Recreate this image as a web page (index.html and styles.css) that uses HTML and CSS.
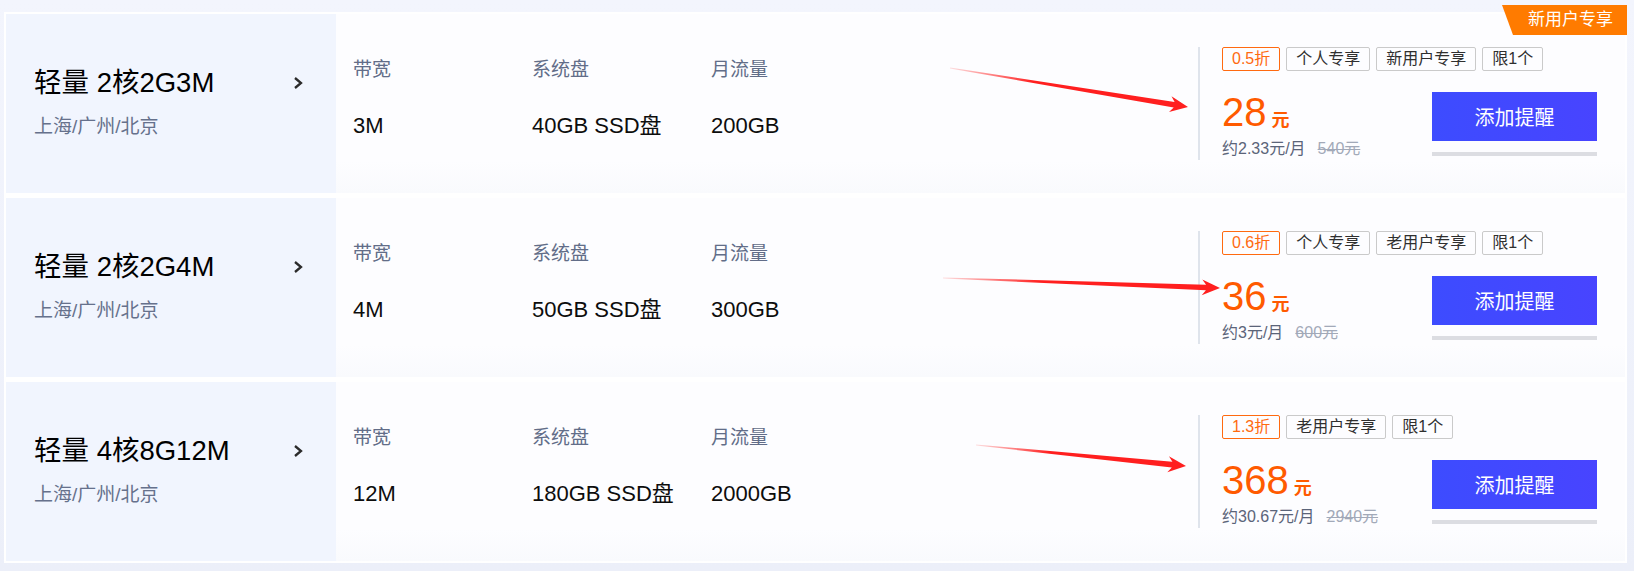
FILE: index.html
```html
<!DOCTYPE html>
<html lang="zh-CN">
<head>
  <meta charset="UTF-8" />
  <meta name="viewport" content="width=device-width, initial-scale=1" />
  <title>轻量应用服务器</title>
  <link rel="stylesheet" href="styles.css">
</head>
<body>
  <div class="list">

    <div class="plan">
      <div class="plan-name">
        <div class="plan-title">
          <span>轻量 2核2G3M</span>
          <svg class="chevron" width="10" height="14" viewBox="0 0 10 14"><polyline points="2,2 8,7 2,12" /></svg>
        </div>
        <div class="plan-region">上海/广州/北京</div>
      </div>
      <div class="specs">
        <div class="spec"><div class="spec-label">带宽</div><div class="spec-value">3M</div></div>
        <div class="spec"><div class="spec-label">系统盘</div><div class="spec-value">40GB SSD盘</div></div>
        <div class="spec"><div class="spec-label">月流量</div><div class="spec-value">200GB</div></div>
      </div>
      <div class="deal">
        <div class="deal-info">
          <div class="tags">
            <span class="tag tag-off">0.5折</span>
            <span class="tag">个人专享</span>
            <span class="tag">新用户专享</span>
            <span class="tag">限1个</span>
          </div>
          <div class="price"><span class="price-num">28</span><span class="price-unit">元</span></div>
          <div class="price-sub">约2.33元/月<s>540元</s></div>
        </div>
        <div class="deal-action">
          <button class="remind">添加提醒</button>
          <div class="remind-bar"></div>
        </div>
      </div>
      <svg class="arrow">
        <defs>
          <linearGradient id="fade1" x1="0" y1="0" x2="1" y2="0">
            <stop offset="0" stop-color="#ff3030" stop-opacity="0.15" />
            <stop offset="0.35" stop-color="#ff1f1f" stop-opacity="1" />
          </linearGradient>
        </defs>
        <polygon fill="url(#fade1)" points="943.9,54.4 1167.7,93.5 1163,98 1182,93 1165.5,82.2 1168.6,88 944.1,53.6" />
      </svg>
      <div class="ribbon">新用户专享</div>
    </div>

    <div class="plan">
      <div class="plan-name">
        <div class="plan-title">
          <span>轻量 2核2G4M</span>
          <svg class="chevron" width="10" height="14" viewBox="0 0 10 14"><polyline points="2,2 8,7 2,12" /></svg>
        </div>
        <div class="plan-region">上海/广州/北京</div>
      </div>
      <div class="specs">
        <div class="spec"><div class="spec-label">带宽</div><div class="spec-value">4M</div></div>
        <div class="spec"><div class="spec-label">系统盘</div><div class="spec-value">50GB SSD盘</div></div>
        <div class="spec"><div class="spec-label">月流量</div><div class="spec-value">300GB</div></div>
      </div>
      <div class="deal">
        <div class="deal-info">
          <div class="tags">
            <span class="tag tag-off">0.6折</span>
            <span class="tag">个人专享</span>
            <span class="tag">老用户专享</span>
            <span class="tag">限1个</span>
          </div>
          <div class="price"><span class="price-num">36</span><span class="price-unit">元</span></div>
          <div class="price-sub">约3元/月<s>600元</s></div>
        </div>
        <div class="deal-action">
          <button class="remind">添加提醒</button>
          <div class="remind-bar"></div>
        </div>
      </div>
      <svg class="arrow">
        <defs>
          <linearGradient id="fade2" x1="0" y1="0" x2="1" y2="0">
            <stop offset="0" stop-color="#ff3030" stop-opacity="0.15" />
            <stop offset="0.35" stop-color="#ff1f1f" stop-opacity="1" />
          </linearGradient>
        </defs>
        <polygon fill="url(#fade2)" points="937,80.4 1199.9,92.3 1195.7,97.3 1214,90 1196.3,81.4 1200.1,86.7 937,79.6" />
      </svg>
    </div>

    <div class="plan">
      <div class="plan-name">
        <div class="plan-title">
          <span>轻量 4核8G12M</span>
          <svg class="chevron" width="10" height="14" viewBox="0 0 10 14"><polyline points="2,2 8,7 2,12" /></svg>
        </div>
        <div class="plan-region">上海/广州/北京</div>
      </div>
      <div class="specs">
        <div class="spec"><div class="spec-label">带宽</div><div class="spec-value">12M</div></div>
        <div class="spec"><div class="spec-label">系统盘</div><div class="spec-value">180GB SSD盘</div></div>
        <div class="spec"><div class="spec-label">月流量</div><div class="spec-value">2000GB</div></div>
      </div>
      <div class="deal">
        <div class="deal-info">
          <div class="tags">
            <span class="tag tag-off">1.3折</span>
            <span class="tag">老用户专享</span>
            <span class="tag">限1个</span>
          </div>
          <div class="price"><span class="price-num">368</span><span class="price-unit">元</span></div>
          <div class="price-sub">约30.67元/月<s>2940元</s></div>
        </div>
        <div class="deal-action">
          <button class="remind">添加提醒</button>
          <div class="remind-bar"></div>
        </div>
      </div>
      <svg class="arrow">
        <defs>
          <linearGradient id="fade3" x1="0" y1="0" x2="1" y2="0">
            <stop offset="0" stop-color="#ff3030" stop-opacity="0.15" />
            <stop offset="0.35" stop-color="#ff1f1f" stop-opacity="1" />
          </linearGradient>
        </defs>
        <polygon fill="url(#fade3)" points="970,63.4 1165.8,85.4 1161.3,90.2 1180,84 1162.9,74.3 1166.4,79.8 970,62.6" />
      </svg>
    </div>

  </div>
</body>
</html>
```

FILE: styles.css
```css
html, body {
  margin: 0;
  padding: 0;
}

body {
  height: 571px;
  background: linear-gradient(180deg, #f3f5fd 0%, #eceff9 100%);
  font-family: "Liberation Sans", "Noto Sans CJK SC", sans-serif;
  color: #111;
}

.list {
  box-sizing: border-box;
  width: 1623px;
  margin: 12px 0 0 4px;
  padding: 2px;
  background: #fff;
  display: flex;
  flex-direction: column;
  gap: 5px;
}

.plan {
  position: relative;
  height: 179px;
  display: flex;
  background: linear-gradient(180deg, #fdfdff 0%, #fdfdff 82%, #f9fafd 100%);
}

/* left block with plan name */
.plan-name {
  box-sizing: border-box;
  width: 330px;
  padding: 0 33px 3px 28px;
  background: #f1f5fe;
  display: flex;
  flex-direction: column;
  justify-content: center;
}

.plan-title {
  display: flex;
  justify-content: space-between;
  align-items: center;
  font-size: 27.5px;
  line-height: 34px;
  color: #000;
}

.chevron {
  fill: none;
  stroke: #2b2b2b;
  stroke-width: 2.3;
}

.plan-region {
  margin-top: 15px;
  font-size: 19px;
  line-height: 24px;
  color: #66718c;
}

/* middle block with specs */
.specs {
  flex: 1;
  display: flex;
  padding: 43px 0 0 17px;
}

.spec {
  width: 179px;
}

.spec-label {
  font-size: 19px;
  line-height: 26px;
  color: #626d88;
}

.spec-value {
  margin-top: 28px;
  font-size: 22px;
  line-height: 30px;
  color: #0d0d0d;
}

/* right block with price */
.deal {
  flex-shrink: 0;
  width: 427px;
  display: flex;
  align-items: flex-start;
}

.deal-info {
  flex: 1 1 0;
  min-width: 0;
  box-sizing: border-box;
  height: 113px;
  margin-top: 33px;
  padding-left: 22px;
  border-left: 2px solid #dfe4ec;
}

.tags {
  display: flex;
  gap: 6px;
  width: max-content;
}

.tag {
  flex-shrink: 0;
  box-sizing: border-box;
  height: 24px;
  padding: 0 9px;
  border: 1px solid #cacaca;
  border-radius: 2px;
  font-size: 16px;
  line-height: 22px;
  white-space: nowrap;
  color: #2f2f2f;
}

.tag-off {
  border-color: #ff6a10;
  color: #ff6a10;
}

.price {
  display: flex;
  align-items: baseline;
  height: 44px;
  margin-top: 19px;
  color: #ff5a00;
}

.price-num {
  font-size: 40px;
  line-height: 44px;
}

.price-unit {
  margin-left: 5px;
  font-size: 18px;
  font-weight: bold;
}

.price-sub {
  margin-top: 5px;
  font-size: 16px;
  line-height: 20px;
  white-space: nowrap;
  color: #5b6479;
}

.price-sub s {
  margin-left: 12px;
  color: #a2a9b8;
}

.deal-action {
  flex-shrink: 0;
  width: 165px;
  margin: 78px 28px 0 0;
}

.remind {
  display: block;
  width: 165px;
  height: 49px;
  padding: 0;
  border: none;
  background: linear-gradient(90deg, #3d4cff 0%, #4844ff 100%);
  color: #fff;
  font-family: inherit;
  font-size: 20px;
  cursor: pointer;
}

.remind-bar {
  height: 4px;
  margin-top: 11px;
  background: #dcdde2;
}

/* red annotation arrows drawn over the row */
.arrow {
  position: absolute;
  left: 0;
  top: 0;
  width: 100%;
  height: 100%;
  pointer-events: none;
}

.ribbon {
  position: absolute;
  top: -9px;
  right: -2px;
  box-sizing: border-box;
  width: 125px;
  height: 30px;
  padding-right: 14px;
  background: #ff7b00;
  clip-path: polygon(0 0, 100% 0, 100% 100%, 11px 100%);
  color: #fff;
  font-size: 17px;
  line-height: 30px;
  text-align: right;
}
```
